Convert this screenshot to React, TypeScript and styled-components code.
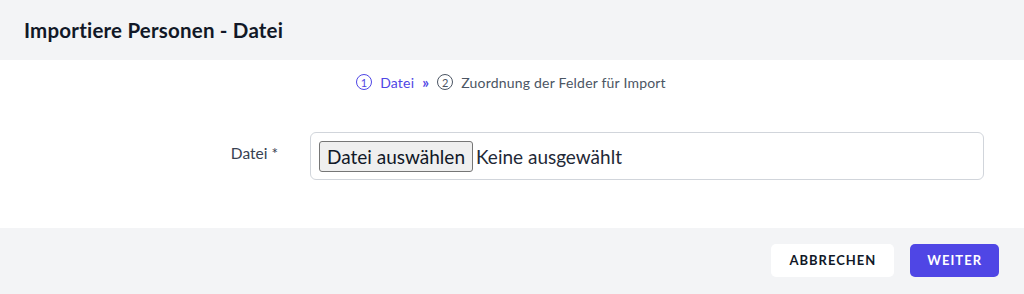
import { createGlobalStyle, styled } from 'styled-components'

const GlobalStyle = createGlobalStyle`
  html, body { margin: 0; padding: 0; background: #ffffff; }
  body { font-family: Lato, "Noto Sans", sans-serif; color: #111827; }
  * { box-sizing: border-box; }
`

const Modal = styled.div`
  width: 1024px;
  height: 294px;
  display: flex;
  flex-direction: column;
`

const Header = styled.header`
  height: 60px;
  background: #f3f4f6;
  display: flex;
  align-items: center;
  padding: 0 24px;
`

const Title = styled.h1`
  margin: 0;
  font-size: 20.5px;
  font-weight: 700;
  color: #111827;
  letter-spacing: 0.2px;
`

const Body = styled.main`
  flex: 1;
  display: flex;
  flex-direction: column;
  padding-top: 13px;
`

const Steps = styled.ol`
  list-style: none;
  margin: 0;
  padding: 0;
  display: flex;
  justify-content: center;
  align-items: center;
  gap: 7px;
  font-size: 14px;
  letter-spacing: 0.2px;
  padding-right: 2px;
`

const Step = styled.li<{ $active?: boolean }>`
  display: flex;
  align-items: center;
  gap: 8px;
  color: ${(p) => (p.$active ? '#4f46e5' : '#4b5563')};
`

const StepNum = styled.span`
  width: 16px;
  height: 16px;
  border: 1px solid currentColor;
  border-radius: 50%;
  display: inline-flex;
  align-items: center;
  justify-content: center;
  font-size: 11px;
  line-height: 1;
`

const Sep = styled.span`
  color: #4f46e5;
  font-weight: 700;
  font-size: 15px;
  margin: 0 1px;
`

const FieldRow = styled.div`
  display: flex;
  align-items: center;
  margin-top: 41px;
`

const Label = styled.label`
  width: 278px;
  text-align: right;
  font-size: 15.5px;
  color: #374151;
  padding-bottom: 6px;
`

const InputBox = styled.div`
  margin-left: 32px;
  width: 674px;
  height: 48px;
  border: 1px solid #d1d5db;
  border-radius: 6px;
  display: flex;
  align-items: center;
  padding: 0 8px;
  gap: 3px;
  font-size: 19px;
  color: #1f2937;
`

const FileButton = styled.span`
  height: 31px;
  padding: 0 7px;
  display: inline-flex;
  align-items: center;
  background: #efefef;
  border: 1px solid #767676;
  border-radius: 3px;
  color: #111827;
`

const Footer = styled.footer`
  height: 66px;
  background: #f3f4f6;
  display: flex;
  justify-content: flex-end;
  align-items: center;
  gap: 16px;
  padding: 0 25px 2px 0;
`

const Button = styled.button<{ $primary?: boolean }>`
  height: 33px;
  padding: 0 ${(p) => (p.$primary ? '17px' : '18px')};
  border: none;
  border-radius: 5px;
  font-family: inherit;
  font-size: 13px;
  font-weight: 700;
  letter-spacing: 1px;
  background: ${(p) => (p.$primary ? '#4f46e5' : '#ffffff')};
  color: ${(p) => (p.$primary ? '#ffffff' : '#111827')};
`

export default function App() {
  return (
    <>
      <GlobalStyle />
      <Modal>
        <Header>
          <Title>Importiere Personen - Datei</Title>
        </Header>
        <Body>
          <Steps>
            <Step $active>
              <StepNum>1</StepNum>
              Datei
            </Step>
            <Sep>»</Sep>
            <Step>
              <StepNum>2</StepNum>
              Zuordnung der Felder für Import
            </Step>
          </Steps>
          <FieldRow>
            <Label>Datei *</Label>
            <InputBox>
              <FileButton>Datei auswählen</FileButton>
              Keine ausgewählt
            </InputBox>
          </FieldRow>
        </Body>
        <Footer>
          <Button>ABBRECHEN</Button>
          <Button $primary>WEITER</Button>
        </Footer>
      </Modal>
    </>
  )
}
